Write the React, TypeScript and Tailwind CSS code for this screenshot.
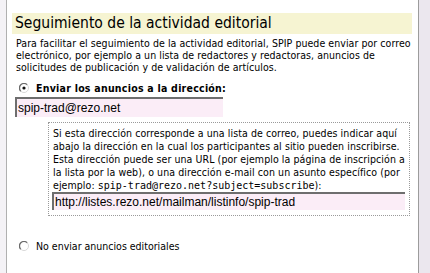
import React from "react";

const body = { fontFamily: '"DejaVu Sans Condensed", "DejaVu Sans", Verdana, sans-serif' };
const mono = { fontFamily: '"DejaVu Sans Mono", "Liberation Mono", monospace' };
const arial = { fontFamily: '"Liberation Sans", Arial, sans-serif' };

function Radio({ checked }: { checked?: boolean }) {
  return (
    <svg width="10" height="10" viewBox="0 0 10 10" className="shrink-0">
      <path d="M8.2 1.8 A4.5 4.5 0 0 0 1.8 8.2" fill="none" stroke="#6b6b6b" strokeWidth="1.3" />
      <path d="M1.8 8.2 A4.5 4.5 0 0 0 8.2 1.8" fill="none" stroke="#d8d8d8" strokeWidth="1" />
      {checked && <circle cx="5" cy="5" r="1.6" fill="#111" />}
    </svg>
  );
}

export default function App() {
  return (
    <div className="w-[430px] h-[273px] flex bg-white overflow-hidden text-black" style={body}>
      <div className="w-[7px] h-full bg-[#f4f2f6] border-r border-[#b0b0b0] shrink-0" />
      <div className="flex-1 h-full flex flex-col pt-[13px] pl-[5px] pr-[6px] [font-stretch:condensed]">
        <div className="h-[21px] bg-[#f6f4d2] pl-[3px] text-[15.5px] leading-[21px] whitespace-nowrap">
          Seguimiento de la actividad editorial
        </div>
        <p className="mt-[3px] pl-[4px] text-[10.5px] leading-[12px] whitespace-nowrap tracking-[0.06px]">
          Para facilitar el seguimiento de la actividad editorial, SPIP puede enviar por correo
          <br />
          electrónico, por ejemplo a un lista de redactores y redactoras, anuncios de
          <br />
          solicitudes de publicación y de validación de artículos.
        </p>
        <div className="mt-[9px] pl-[7px] flex items-center h-[12px] gap-[7px]">
          <Radio checked />
          <span className="text-[10.5px] font-bold leading-[12px] whitespace-nowrap tracking-[0.25px]">
            Enviar los anuncios a la dirección:
          </span>
        </div>
        <div
          className="mt-[3px] ml-[3px] w-[208px] h-[20px] bg-[#fbedf7] border-t-2 border-l-2 border-[#6e6e6e] pl-[1px] text-[12px] leading-[18px] whitespace-nowrap"
          style={arial}
        >
          spip-trad@rezo.net
        </div>
        <div className="mt-[5px] ml-[36px] mr-[2px] border border-dotted border-[#9a9a9a] pl-[3px] pr-[4px] pt-[4px] pb-[5px]">
          <p className="pl-[1px] text-[10.5px] leading-[13px] whitespace-nowrap tracking-[0.08px]">
            Si esta dirección corresponde a una lista de correo, puedes indicar aquí
            <br />
            abajo la dirección en la cual los participantes al sitio pueden inscribirse.
            <br />
            Esta dirección puede ser una URL (por ejemplo la página de inscripción a
            <br />
            la lista por la web), o una dirección e-mail con un asunto específico (por
            <br />
            ejemplo: <span className="text-[10px] tracking-normal" style={mono}>spip-trad@rezo.net?subject=subscribe</span>):
          </p>
          <div
            className="h-[18px] bg-[#fbedf7] border-t-2 border-l-2 border-[#6e6e6e] pl-[1px] text-[12px] leading-[16px] whitespace-nowrap"
            style={arial}
          >
            http://listes.rezo.net/mailman/listinfo/spip-trad
          </div>
        </div>
        <div className="mt-[24px] pl-[7px] flex items-center h-[12px] gap-[7px]">
          <Radio />
          <span className="text-[10.5px] leading-[12px] whitespace-nowrap">No enviar anuncios editoriales</span>
        </div>
      </div>
      <div className="w-[14px] h-full bg-[#ebe7ee] border-l border-[#9c9c9c] shrink-0" />
    </div>
  );
}
